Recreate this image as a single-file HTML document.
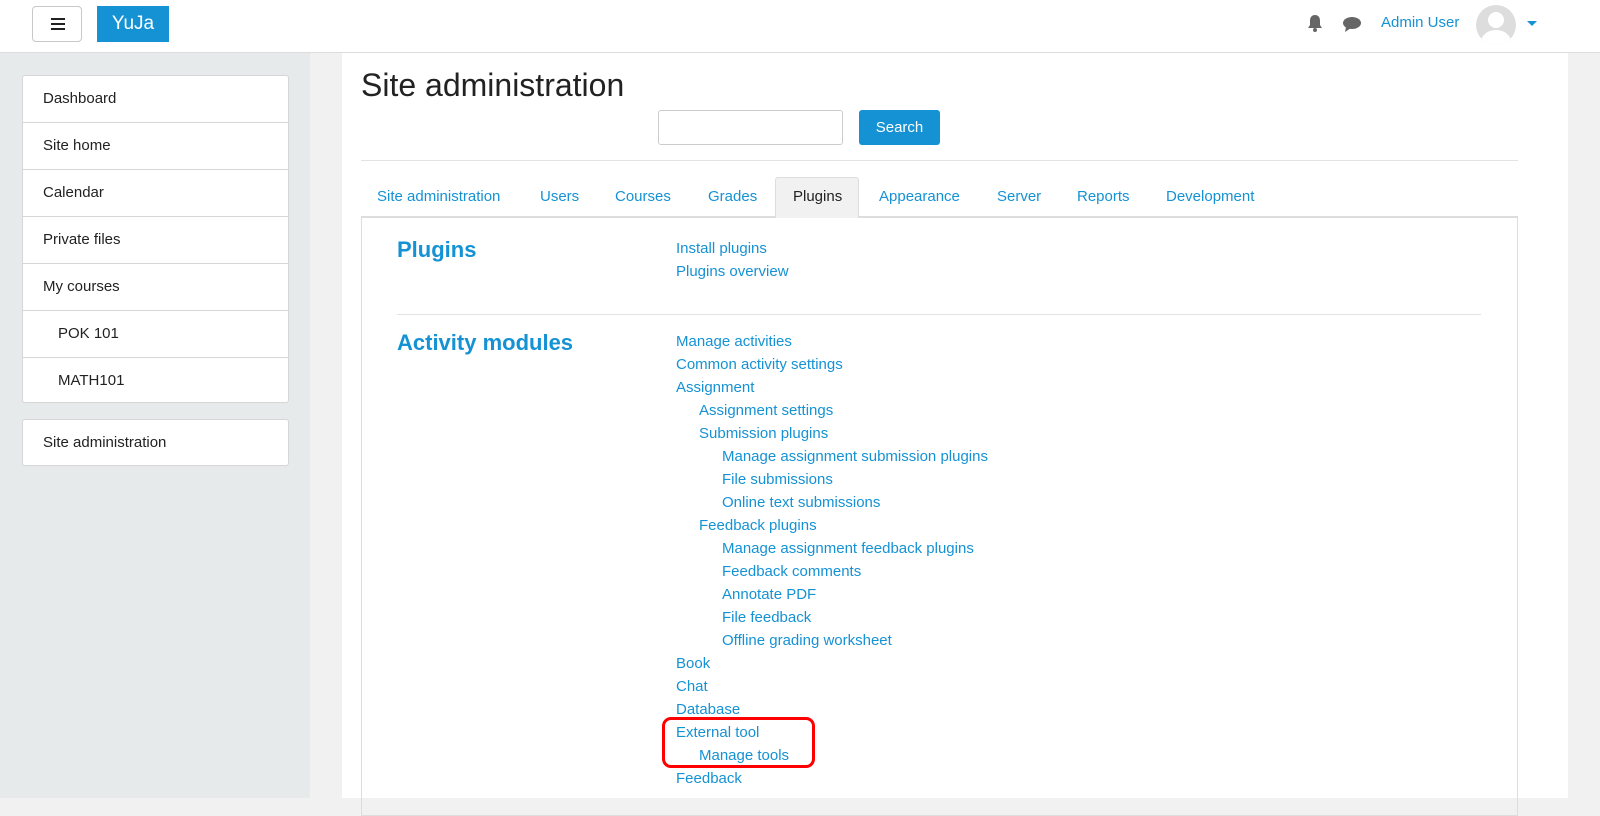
<!DOCTYPE html>
<html><head><meta charset="utf-8"><style>
*{box-sizing:border-box;margin:0;padding:0}
body{width:1600px;height:798px;overflow:hidden;font-family:"Liberation Sans",Arial,sans-serif;background:#f1f1f1;position:relative;color:#222}
.a{position:absolute}
a,.l{color:#1592d4;text-decoration:none}
#hdr{left:0;top:0;width:1600px;height:53px;background:#fff;border-bottom:1px solid #ddd}
#side{left:0;top:53px;width:310px;height:745px;background:#e7eaeb}
.card{background:#fff;border:1px solid #d6d6d6;border-radius:3px}
.it{height:47px;border-bottom:1px solid #d6d6d6;padding-left:20px;line-height:46px;font-size:15px}
#main{left:342px;top:53px;width:1226px;height:745px;background:#fff}
.t{font-size:15px;top:188px}
.lk{position:absolute;font-size:15px;line-height:23px}
</style></head><body>
<div class="a" id="hdr">
 <div class="a" style="left:32px;top:6px;width:50px;height:36px;border:1px solid #c8c8c8;border-radius:4px;background:#fff">
  <div class="a" style="left:18px;top:11px;width:14px;height:2px;background:#222"></div>
  <div class="a" style="left:18px;top:16px;width:14px;height:2px;background:#222"></div>
  <div class="a" style="left:18px;top:21px;width:14px;height:2px;background:#222"></div>
 </div>
 <div class="a" style="left:97px;top:6px;width:72px;height:36px;background:#1592d4;color:#fff;font-size:19px;line-height:36px;text-align:center">YuJa</div>
 <svg class="a" style="left:1306px;top:14px" width="18" height="19" viewBox="0 0 18 19"><path d="M9 1c-3 0-5 2.3-5 5.5V11L2 14h14l-2-3V6.5C14 3.3 12 1 9 1z" fill="#666"/><circle cx="9" cy="16" r="2" fill="#666"/></svg>
 <svg class="a" style="left:1342px;top:15px" width="20" height="18" viewBox="0 0 20 18"><ellipse cx="10" cy="8" rx="9" ry="6" fill="#666"/><path d="M4 12l-1 5 6-4z" fill="#666"/></svg>
 <div class="a l" style="left:1381px;top:14px;font-size:15px">Admin User</div>
 <div class="a" style="left:1476px;top:5px;width:40px;height:40px;border-radius:50%;background:#ddd;overflow:hidden">
  <div class="a" style="left:12px;top:7px;width:16px;height:16px;border-radius:50%;background:#fff"></div>
  <div class="a" style="left:5px;top:25px;width:30px;height:24px;border-radius:50%;background:#fff"></div>
 </div>
 <div class="a" style="left:1527px;top:21px;border-left:5px solid transparent;border-right:5px solid transparent;border-top:5px solid #1592d4"></div>
</div>
<div class="a" id="side">
 <div class="a card" style="left:22px;top:22px;width:267px;height:328px">
  <div class="it">Dashboard</div><div class="it">Site home</div><div class="it">Calendar</div><div class="it">Private files</div><div class="it">My courses</div><div class="it" style="padding-left:35px">POK 101</div><div class="it" style="padding-left:35px;border:0">MATH101</div>
 </div>
 <div class="a card" style="left:22px;top:366px;width:267px;height:47px"><div class="it" style="border:0">Site administration</div></div>
</div>
<div class="a" id="main"></div>
<div class="a" style="left:361px;top:67px;font-size:32px;color:#222">Site administration</div>
<div class="a" style="left:658px;top:110px;width:185px;height:35px;border:1px solid #ccc;border-radius:3px"></div>
<div class="a" style="left:859px;top:110px;width:81px;height:35px;background:#1592d4;border-radius:3px;color:#fff;font-size:15px;line-height:35px;text-align:center">Search</div>
<div class="a" style="left:361px;top:160px;width:1157px;height:1px;background:#e3e3e3"></div>
<div class="a" style="left:361px;top:216px;width:1157px;height:600px;border:1px solid #ddd;border-top:2px solid #ddd"></div>
<div class="a" style="left:775px;top:177px;width:84px;height:41px;background:#f1f1f1;border:1px solid #ddd;border-bottom:0;border-radius:3px 3px 0 0"></div>
<div class="a l t" style="left:377px">Site administration</div>
<div class="a l t" style="left:540px">Users</div>
<div class="a l t" style="left:615px">Courses</div>
<div class="a l t" style="left:708px">Grades</div>
<div class="a t" style="left:793px;color:#222">Plugins</div>
<div class="a l t" style="left:879px">Appearance</div>
<div class="a l t" style="left:997px">Server</div>
<div class="a l t" style="left:1077px">Reports</div>
<div class="a l t" style="left:1166px">Development</div>
<div class="a l" style="left:397px;top:237px;font-size:22px;font-weight:bold">Plugins</div>
<div class="lk l" style="left:676px;top:237px">Install plugins</div>
<div class="lk l" style="left:676px;top:260px">Plugins overview</div>
<div class="a" style="left:397px;top:314px;width:1084px;height:1px;background:#e3e3e3"></div>
<div class="a l" style="left:397px;top:330px;font-size:22px;font-weight:bold">Activity modules</div>
<div class="lk l" style="left:676px;top:330px">Manage activities<br>Common activity settings<br>Assignment<br>
<span style="padding-left:23px">Assignment settings</span><br><span style="padding-left:23px">Submission plugins</span><br>
<span style="padding-left:46px">Manage assignment submission plugins</span><br><span style="padding-left:46px">File submissions</span><br><span style="padding-left:46px">Online text submissions</span><br>
<span style="padding-left:23px">Feedback plugins</span><br>
<span style="padding-left:46px">Manage assignment feedback plugins</span><br><span style="padding-left:46px">Feedback comments</span><br><span style="padding-left:46px">Annotate PDF</span><br><span style="padding-left:46px">File feedback</span><br><span style="padding-left:46px">Offline grading worksheet</span><br>
Book<br>Chat<br>Database<br>External tool<br><span style="padding-left:23px">Manage tools</span><br>Feedback</div>
<div class="a" style="left:662px;top:717px;width:153px;height:51px;border:3px solid #f00;border-radius:9px"></div>
</body></html>
